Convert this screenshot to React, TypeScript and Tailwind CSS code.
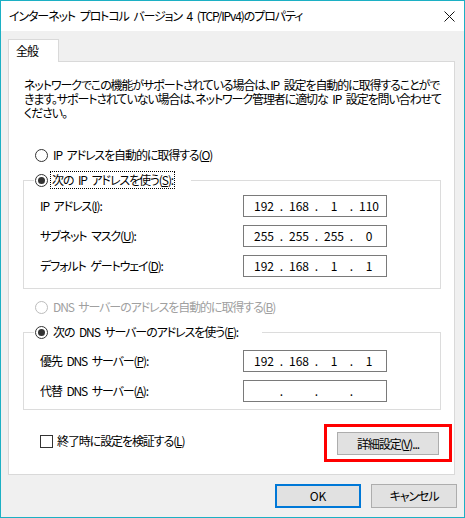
import React from "react";

type RadioProps = { checked?: boolean; disabled?: boolean };

function Radio({ checked, disabled }: RadioProps) {
  return (
    <span
      className={`flex h-[13px] w-[13px] shrink-0 items-center justify-center rounded-full border bg-white ${
        disabled ? "border-[#bcbcbc]" : "border-[#333333]"
      }`}
    >
      {checked && <span className="h-[7px] w-[7px] rounded-full bg-[#333333]" />}
    </span>
  );
}

function IpBox({ value }: { value: string[] }) {
  return (
    <div className="flex h-[22px] w-[144px] items-center border border-[#7a7a7a] bg-white pl-[6px] leading-none tracking-normal">
      {value.map((v, i) => (
        <div key={i} className="flex">
          <span className="w-[28px] text-center">{v}</span>
          {i < 3 && <span className="w-[7px] text-center">.</span>}
        </div>
      ))}
    </div>
  );
}

function Row({ label, value, first }: { label: React.ReactNode; value: string[]; first?: boolean }) {
  return (
    <div className={`flex items-center ${first ? "" : "mt-[8px]"}`}>
      <div className="w-[203px]">{label}</div>
      <IpBox value={value} />
    </div>
  );
}

export default function App() {
  return (
    <div className="flex h-[518px] w-[465px] flex-col border border-[#1cb0c4] bg-[#f0f0f0] text-[12px] leading-[14px] tracking-[-1.1px] [word-spacing:3px] text-black font-['Noto_Sans_CJK_JP','Noto_Sans',sans-serif] [font-feature-settings:'palt']">
      {/* title bar */}
      <div className="flex h-[30px] shrink-0 items-center justify-between bg-white pl-[8px] pr-[9px]">
        <span>インターネット プロトコル バージョン 4 (TCP/IPv4)のプロパティ</span>
        <svg width="11" height="11" viewBox="0 0 11 11">
          <path d="M0.5 0.5 L10.5 10.5 M10.5 0.5 L0.5 10.5" stroke="#111" strokeWidth="1" />
        </svg>
      </div>

      <div className="flex flex-1 flex-col pl-[7px] pt-[8px]">
        {/* tab */}
        <div className="relative z-10 -mb-px flex h-[23px] w-[51px] items-center border border-b-0 border-[#d9d9d9] bg-white pl-[7px]">
          全般
        </div>

        {/* panel */}
        <div className="flex h-[414px] w-[447px] flex-col border border-[#d9d9d9] bg-white">
          <p className="ml-[15px] mt-[16px] whitespace-nowrap">
            ネットワークでこの機能がサポートされている場合は、IP 設定を自動的に取得することがで
            <br />
            きます。サポートされていない場合は、ネットワーク管理者に適切な IP 設定を問い合わせて
            <br />
            ください。
          </p>

          <div className="ml-[26px] mt-[27px] flex h-[16px] items-center gap-[5px]">
            <Radio />
            <span>
              IP アドレスを自動的に取得する(<u>O</u>)
            </span>
          </div>

          <fieldset className="ml-[14px] mr-[13px] mt-[8px] border border-[#dcdcdc] pb-[11px]">
            <legend className="ml-[10px] w-[157px] pl-px">
              <span className="flex h-[18px] items-center gap-[2px]">
                <Radio checked />
                <span className="border border-dotted border-black px-[1px] leading-[16px]">
                  次の IP アドレスを使う(<u>S</u>):
                </span>
              </span>
            </legend>
            <div className="mt-[6px] pl-[16px]">
              <Row first label={<>IP アドレス(<u>I</u>):</>} value={["192", "168", "1", "110"]} />
              <Row label={<>サブネット マスク(<u>U</u>):</>} value={["255", "255", "255", "0"]} />
              <Row label={<>デフォルト ゲートウェイ(<u>D</u>):</>} value={["192", "168", "1", "1"]} />
            </div>
          </fieldset>

          <div className="ml-[26px] mt-[10px] flex h-[16px] items-center gap-[5px] text-[#a0a0a0]">
            <Radio disabled />
            <span>
              DNS サーバーのアドレスを自動的に取得する(<u>B</u>)
            </span>
          </div>

          <fieldset className="ml-[14px] mr-[13px] mt-[8px] border border-[#dcdcdc] pb-[7px]">
            <legend className="ml-[10px] w-[228px] pl-px">
              <span className="flex h-[18px] items-center gap-[5px]">
                <Radio checked />
                <span>
                  次の DNS サーバーのアドレスを使う(<u>E</u>):
                </span>
              </span>
            </legend>
            <div className="mt-[9px] pl-[16px]">
              <Row first label={<>優先 DNS サーバー(<u>P</u>):</>} value={["192", "168", "1", "1"]} />
              <Row label={<>代替 DNS サーバー(<u>A</u>):</>} value={["", "", "", ""]} />
            </div>
          </fieldset>

          <div className="mt-[14px] flex items-start justify-between pr-[2px]">
            <div className="ml-[31px] mt-[10px] flex items-center gap-[4px]">
              <span className="h-[13px] w-[13px] border border-[#333333] bg-white" />
              <span>
                終了時に設定を検証する(<u>L</u>)
              </span>
            </div>
            <div className="border-[3px] border-[#ff0000] px-[10px] pb-[4px] pt-[5px]">
              <button className="flex h-[23px] w-[102px] items-center justify-center border border-[#adadad] bg-[#e1e1e1]">
                詳細設定(<u>V</u>)...
              </button>
            </div>
          </div>
        </div>

        {/* bottom buttons */}
        <div className="mt-[9px] flex justify-end gap-[10px] pr-[7px]">
          <button className="flex h-[24px] w-[86px] items-center justify-center border-2 border-[#0078d7] bg-[#e1e1e1] tracking-normal">
            OK
          </button>
          <button className="flex h-[24px] w-[86px] items-center justify-center border border-[#adadad] bg-[#e1e1e1]">
            キャンセル
          </button>
        </div>
      </div>
    </div>
  );
}
